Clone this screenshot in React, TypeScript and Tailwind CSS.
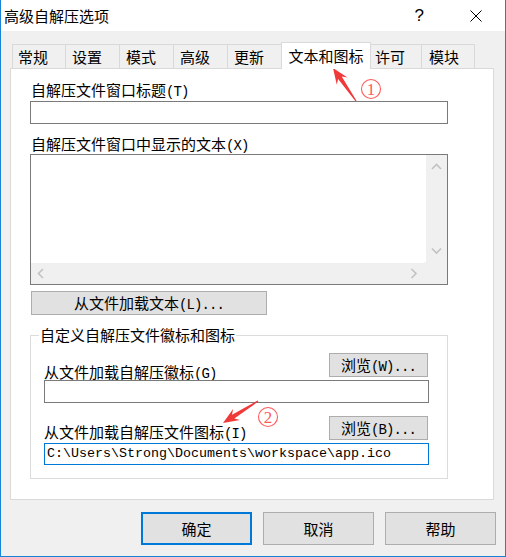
import React from "react";

const mono = "font-['Liberation_Mono',monospace]";

function Lbl({ cjk, k, className = "" }: { cjk: string; k: string; className?: string }) {
  return (
    <span className={`block h-[16px] text-[15px] leading-[16px] text-black whitespace-nowrap ${className}`}>
      {cjk}
      <span className={`${mono} text-[14px] leading-[16px] tracking-[-0.9px]`}>({k})</span>
    </span>
  );
}

function Btn({ cjk, k, className = "" }: { cjk: string; k: string; className?: string }) {
  return (
    <div
      className={`flex items-center justify-center border border-[#adadad] bg-[#e1e1e1] text-[15px] leading-[16px] text-black whitespace-nowrap ${className}`}
    >
      <span className="block h-[16px] leading-[16px]">
        {cjk}
        <span className={`${mono} text-[14px] leading-[16px] tracking-[-0.9px]`}>({k})...</span>
      </span>
    </div>
  );
}

function arrowPts(tx: number, ty: number, px: number, py: number) {
  const dx = px - tx;
  const dy = py - ty;
  const L = Math.hypot(dx, dy);
  const ux = dx / L;
  const uy = dy / L;
  const nx = -uy;
  const ny = ux;
  const head = 16;
  const hw = 6.5;
  const neck = 12;
  const sw = 2.2;
  const tw = 0.6;
  const bx = px - ux * head;
  const by = py - uy * head;
  const kx = px - ux * neck;
  const ky = py - uy * neck;
  const pts = [
    [px, py],
    [bx + nx * hw, by + ny * hw],
    [kx + nx * sw, ky + ny * sw],
    [tx + nx * tw, ty + ny * tw],
    [tx - nx * tw, ty - ny * tw],
    [kx - nx * sw, ky - ny * sw],
    [bx - nx * hw, by - ny * hw],
  ];
  return pts.map((p) => `${p[0].toFixed(1)},${p[1].toFixed(1)}`).join(" ");
}

const tabs: { t: string; w: string; pl: string; active?: boolean; noLeft?: boolean; right?: boolean }[] = [
  { t: "常规", w: "w-[53px]", pl: "pl-[5px]" },
  { t: "设置", w: "w-[54px]", pl: "pl-[6px]" },
  { t: "模式", w: "w-[54px]", pl: "pl-[6px]" },
  { t: "高级", w: "w-[54px]", pl: "pl-[6px]" },
  { t: "更新", w: "w-[54px]", pl: "pl-[6px]" },
  { t: "文本和图标", w: "w-[90px]", pl: "", active: true },
  { t: "许可", w: "w-[50px]", pl: "pl-[4px]", noLeft: true },
  { t: "模块", w: "w-[54px]", pl: "pl-[7px]", right: true },
];

function Chevron({ dir }: { dir: "up" | "down" | "left" | "right" }) {
  const d =
    dir === "up"
      ? "M1 6 L5.5 1.5 L10 6"
      : dir === "down"
      ? "M1 1.5 L5.5 6 L10 1.5"
      : dir === "left"
      ? "M6 1 L1.5 5.5 L6 10"
      : "M1.5 1 L6 5.5 L1.5 10";
  const w = dir === "up" || dir === "down" ? 11 : 8;
  const h = dir === "up" || dir === "down" ? 8 : 11;
  return (
    <svg width={w} height={h} viewBox={`0 0 ${w} ${h}`}>
      <path d={d} fill="none" stroke="#c2c2c2" strokeWidth="1.6" />
    </svg>
  );
}

export default function App() {
  return (
    <div className="relative w-[506px] h-[557px] overflow-hidden bg-[#f0f0f0] border-l border-r border-b border-[#1883d7] flex flex-col font-['Noto_Sans_CJK_SC',sans-serif] text-black">
      {/* title bar */}
      <div className="h-[31px] bg-white flex items-center pl-[3px] pt-[1px] shrink-0">
        <span className="text-[15px] leading-[16px]">高级自解压选项</span>
        <span className="ml-auto text-[17px] leading-[18px] font-['Liberation_Sans',sans-serif] font-light">?</span>
        <svg className="ml-[46px] mr-[23px]" width="12" height="12" viewBox="0 0 12 12">
          <path d="M0.5 0.5 L11.5 11.5 M11.5 0.5 L0.5 11.5" stroke="#000" strokeWidth="1" />
        </svg>
      </div>

      <div className="flex-1 flex flex-col pl-[9px] pr-[11px] pt-[11px]">
        {/* tabs */}
        <div className="flex items-end h-[26px] ml-[2px]">
          {tabs.map((tb) =>
            tb.active ? (
              <div
                key={tb.t}
                className={`relative z-10 ${tb.w} h-[27px] -mb-px bg-white border border-b-0 border-[#d9d9d9] flex items-center justify-center text-[15px] leading-[16px] pb-[1px]`}
              >
                {tb.t}
              </div>
            ) : (
              <div
                key={tb.t}
                className={`${tb.w} h-[24px] bg-[#f0f0f0] border-t border-[#d9d9d9] ${tb.noLeft ? "" : "border-l"} ${
                  tb.right ? "border-r" : ""
                } ${tb.pl} flex items-center text-[15px] leading-[16px] pt-[1px]`}
              >
                {tb.t}
              </div>
            )
          )}
        </div>

        {/* panel */}
        <div className="h-[432px] w-[484px] bg-white border border-[#d9d9d9] pl-[19px] flex flex-col items-start">
          <Lbl cjk="自解压文件窗口标题" k="T" className="mt-[13px] ml-[1px]" />
          <div className="mt-[3px] w-[418px] h-[23px] border border-[#7a7a7a] bg-white" />

          <Lbl cjk="自解压文件窗口中显示的文本" k="X" className="mt-[12px] ml-[1px]" />
          <div className="mt-[2px] w-[418px] h-[131px] border border-[#7a7a7a] bg-[#f0f0f0] grid grid-cols-[1fr_21px] grid-rows-[1fr_21px]">
            <div className="bg-white rounded-br-[3px]" />
            <div className="flex flex-col items-center justify-between pt-[8px] pb-[8px]">
              <Chevron dir="up" />
              <Chevron dir="down" />
            </div>
            <div className="flex items-center justify-between pl-[6px] pr-[8px]">
              <Chevron dir="left" />
              <Chevron dir="right" />
            </div>
            <div />
          </div>

          <Btn cjk="从文件加载文本" k="L" className="mt-[6px] ml-[1px] w-[236px] h-[24px]" />

          {/* group */}
          <div className="relative mt-[20px] w-[418px] h-[144px] border border-[#dcdcdc] pl-[13px] pt-[17px] flex flex-col items-start">
            <span className="absolute left-[8px] -top-[9px] bg-white px-[1px] text-[15px] leading-[16px] whitespace-nowrap">
              自定义自解压文件徽标和图标
            </span>
            <div className="w-[385px] h-[27px] flex justify-between items-end">
              <Lbl cjk="从文件加载自解压徽标" k="G" />
              <Btn cjk="浏览" k="W" className="self-start w-[99px] h-[24px] mr-[1px]" />
            </div>
            <div className="w-[385px] h-[23px] border border-[#7a7a7a] bg-white" />
            <div className="mt-[13px] w-[385px] h-[27px] flex justify-between items-end">
              <Lbl cjk="从文件加载自解压文件图标" k="I" className="mb-[3px]" />
              <Btn cjk="浏览" k="B" className="self-start w-[99px] h-[24px] mr-[1px]" />
            </div>
            <div className="w-[385px] h-[22px] border border-[#0078d7] bg-white flex items-center pl-[2px]">
              <span className={`${mono} text-[13.33px] leading-[14px] text-black whitespace-nowrap`}>
                C:\Users\Strong\Documents\workspace\app.ico
              </span>
            </div>
          </div>
        </div>

        {/* bottom buttons */}
        <div className="mt-[12px] flex justify-end gap-[11px] mr-[-2px]">
          <div className="w-[111px] h-[33px] border-2 border-[#0078d7] bg-[#e1e1e1] flex items-center justify-center text-[15px] leading-[16px]">
            确定
          </div>
          <div className="w-[111px] h-[33px] border border-[#adadad] bg-[#e1e1e1] flex items-center justify-center text-[15px] leading-[16px]">
            取消
          </div>
          <div className="w-[111px] h-[33px] border border-[#adadad] bg-[#e1e1e1] flex items-center justify-center text-[15px] leading-[16px]">
            帮助
          </div>
        </div>
      </div>

      {/* annotations overlay */}
      <svg className="absolute left-0 top-0 pointer-events-none" width="506" height="557" viewBox="0 0 506 557">
        <polygon points={arrowPts(355, 101, 332, 68)} fill="#f03a3a" />
        <polygon points={arrowPts(257, 401, 222, 423)} fill="#f03a3a" />
        <circle cx="370" cy="89" r="9.5" fill="none" stroke="#ff5a5a" strokeWidth="1.1" />
        <text x="370" y="95" textAnchor="middle" fontSize="17" fill="#ff5a5a" fontFamily="Liberation Serif, serif">
          1
        </text>
        <circle cx="267" cy="417" r="9.5" fill="none" stroke="#ff5a5a" strokeWidth="1.1" />
        <text x="267" y="423" textAnchor="middle" fontSize="17" fill="#ff5a5a" fontFamily="Liberation Serif, serif">
          2
        </text>
      </svg>
    </div>
  );
}
